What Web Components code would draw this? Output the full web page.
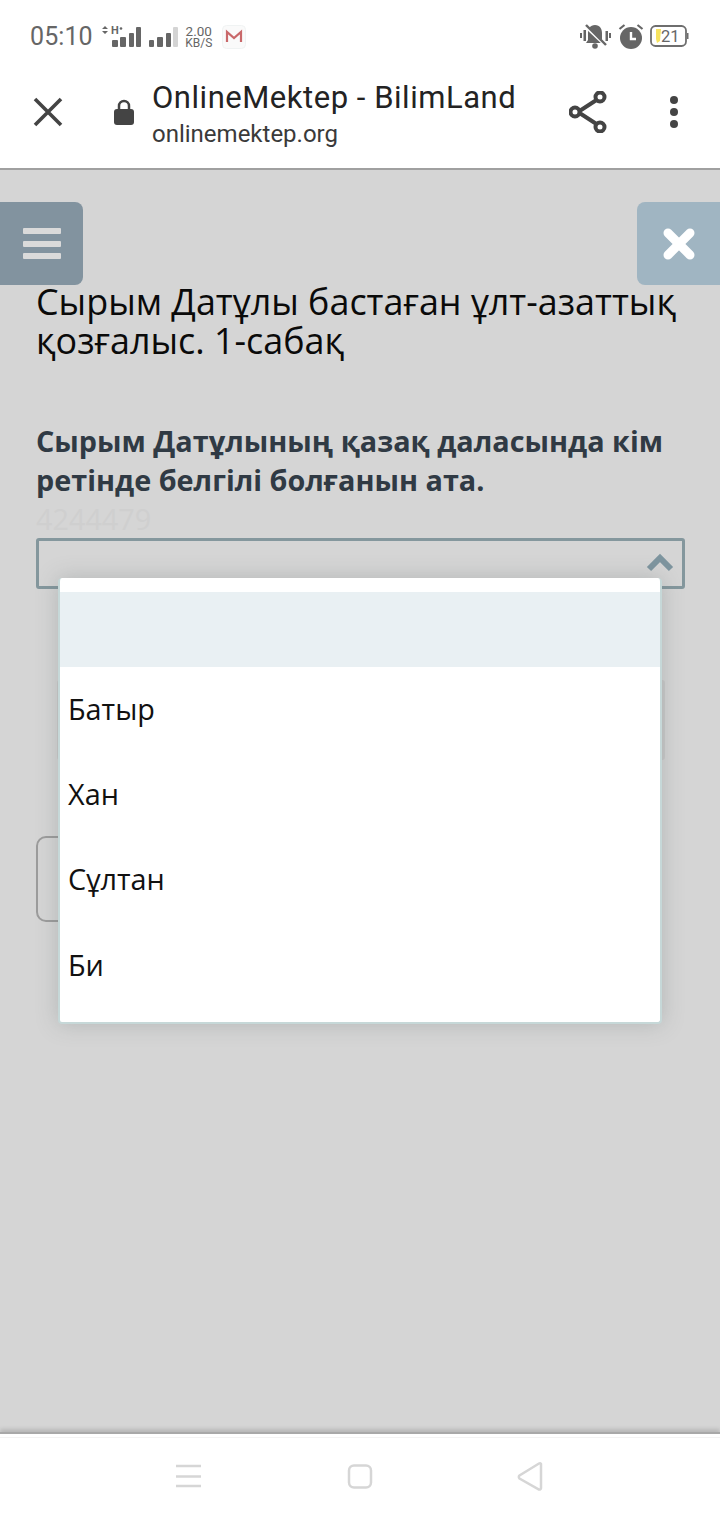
<!DOCTYPE html>
<html><head><meta charset="utf-8">
<style>
html,body{margin:0;padding:0;width:720px;height:1520px;overflow:hidden;background:#fff}
body{display:flex;flex-direction:column;font-family:"Open Sans",sans-serif}
</style></head><body>
<status-bar></status-bar>
<app-toolbar></app-toolbar>
<quiz-page>
  <quiz-select>
    <quiz-option blank></quiz-option>
    <quiz-option>Батыр</quiz-option>
    <quiz-option>Хан</quiz-option>
    <quiz-option>Сұлтан</quiz-option>
    <quiz-option>Би</quiz-option>
  </quiz-select>
</quiz-page>
<nav-bar></nav-bar>
<script>
function def(name,html){
  customElements.define(name,class extends HTMLElement{
    constructor(){super();this.attachShadow({mode:'open'}).innerHTML=html;}
  });
}
def('status-bar',`<style>
:host{display:flex;flex:none;height:70px;box-sizing:border-box;padding:3px 31px 0 30px;align-items:center;justify-content:space-between;font-family:Roboto,sans-serif;color:#666;background:#fff}
.l,.r{display:flex;align-items:center}
.r{margin-top:-2px}
.t{font-size:25px;letter-spacing:.1px;line-height:30px}
.sp{font-size:13.5px;line-height:12px;text-align:center;margin-left:7px;width:28px}
.sp span{display:block;font-size:12px}
svg{display:block}
</style>
<div class="l"><span class="t">05:10</span>
<svg style="margin-left:9px" width="76" height="24" viewBox="0 0 76 24" fill="#666">
<path d="M0 4l3-3 3 3zM0 6l3 3 3-3z"/>
<text x="9" y="9" font-family="Roboto" font-size="11" font-weight="700">H</text><circle cx="19" cy="3.500" r="1.300"/>
<rect x="10" y="15" width="6" height="7" rx="1"/><rect x="18" y="12" width="6" height="10" rx="1"/><rect x="27" y="8" width="5" height="14" rx="1"/><rect x="34" y="2" width="5" height="20" rx="1"/>
<rect x="47" y="15" width="5" height="7" rx="1"/><rect x="55" y="12" width="6" height="10" rx="1"/><rect x="64" y="8" width="5" height="14" rx="1"/><rect x="71" y="2" width="5" height="20" rx="1" fill="#d4d4d4"/>
</svg>
<div class="sp">2.00<span>KB/S</span></div>
<svg style="margin-left:9px" width="24" height="24" viewBox="0 0 24 24"><rect x="0.500" y="0.500" width="23" height="23" rx="4" fill="#fafafa" stroke="#f0f3f3"/><path d="M5 17V7l7 6 7-6v10" fill="none" stroke="#c9686a" stroke-width="2.200"/></svg>
</div>
<div class="r">
<svg width="32" height="26" viewBox="0 0 32 26" fill="#666"><path d="M16 2c-5 0-7 4-7 8v7l-2 3h18l-2-3v-7c0-4-2-8-7-8z"/><circle cx="16" cy="23" r="2.800"/><path d="M6 3l21 20" stroke="#fff" stroke-width="3"/><path d="M7 2l20 20" stroke="#666" stroke-width="2.400"/><rect x="1" y="10" width="2" height="5"/><rect x="4.500" y="7" width="2.500" height="11"/><rect x="26.500" y="8" width="2.500" height="10"/><rect x="30" y="10" width="2" height="5"/></svg>
<svg style="margin-left:7px" width="26" height="26" viewBox="0 0 26 26" fill="#666"><circle cx="13" cy="15" r="11"/><path d="M13 9v7h5" fill="none" stroke="#fff" stroke-width="2.400"/><path d="M1.500 6l5-4M24.500 6l-5-4" stroke="#666" stroke-width="2.200"/></svg>
<svg style="margin-left:6px" width="39" height="22" viewBox="0 0 39 22"><rect x="1" y="1" width="35" height="20" rx="4.500" fill="#fff" stroke="#6e6e6e" stroke-width="1.800"/><path d="M37 8h1.500v6H37z" fill="#6e6e6e"/><path d="M6 4h5l-1 12-3 2-1-4z" fill="#f7e35f"/><text x="11" y="17" font-family="Roboto" font-size="16.500" fill="#666">21</text></svg>
</div>`);
def('app-toolbar',`<style>
:host{display:flex;flex:none;height:100px;box-sizing:border-box;align-items:center;background:#fff;border-bottom:2px solid #a0a0a0;font-family:Roboto,sans-serif;color:#232323;padding-bottom:14px}
.x{margin-left:33px;width:30px;height:30px;flex:none}
.lock{margin-left:51px;flex:none}
.tx{margin-left:18px;flex:1;margin-top:6px}
.a{font-size:31px;line-height:38px;letter-spacing:.53px;white-space:nowrap}
.b{font-size:24px;line-height:35px;color:#3a3a3a;white-space:nowrap}
.s{flex:none;margin-right:63px}.m{flex:none;margin-right:42px}
svg{display:block}
</style>
<svg class="x" viewBox="0 0 30 30"><path d="M2 2l26 26M28 2L2 28" stroke="#444" stroke-width="3.600" fill="none"/></svg>
<svg class="lock" width="20" height="28" viewBox="0 0 20 28"><path d="M5 13V8a5 5 0 0 1 10 0v5" fill="none" stroke="#444" stroke-width="2.500"/><rect x="0" y="11" width="20" height="16" rx="3" fill="#444"/></svg>
<div class="tx"><div class="a">OnlineMektep - BilimLand</div><div class="b">onlinemektep.org</div></div>
<svg class="s" width="38" height="42" viewBox="0 0 38 42" fill="none" stroke="#444" stroke-width="4"><path d="M9 21L29 8M9 21l20 13"/><circle cx="6" cy="21" r="4.500" fill="#fff"/><circle cx="31" cy="6" r="4.500" fill="#fff"/><circle cx="31" cy="36" r="4.500" fill="#fff"/></svg>
<svg class="m" width="8" height="32" viewBox="0 0 8 32" fill="#444"><circle cx="4" cy="4" r="4"/><circle cx="4" cy="16" r="4"/><circle cx="4" cy="28" r="4"/></svg>`);
def('quiz-page',`<style>
:host{display:block;flex:1;min-height:0;position:relative;background:#d5d5d5;overflow:hidden;font-family:"Open Sans",sans-serif}
.top{display:flex;justify-content:space-between;margin-top:32px;height:83px}
.btn{width:83px;height:83px;display:flex;align-items:center;justify-content:center}
.m{background:#82939f;border-radius:0 8px 8px 0}
.c{background:#a0b5c2;border-radius:8px 0 0 8px}
.body{padding:0 35px 0 37px}
h1{margin:-3px -10px 0 -1px;font-weight:400;font-size:35.900px;line-height:39px;color:#0a0a0a}
.q{margin:61px -10px 0 -1px;font-weight:700;font-size:28.800px;line-height:39px;color:#303a44}
.id{font-size:28.800px;line-height:39px;color:#cfcfcf;height:39px;margin-left:-1px}
.sel{height:51px;box-sizing:border-box;border:3px solid #84979d;border-radius:3px;position:relative;margin-left:-1px}
.sel svg{position:absolute;right:8px;top:11px}
.ghost{margin:91px 20px 0;height:80px;border:solid #c9c9c9;border-width:0 3px;border-radius:3px}
.sub{margin-top:76px;width:150px;height:86px;box-sizing:border-box;border:2px solid #9c9c9c;border-radius:10px;margin-left:-1px}
.pop{position:absolute;left:58px;top:408px}
</style>
<div class="top">
<div class="btn m"><svg width="38" height="32" viewBox="0 0 38 32" fill="#dadada"><rect width="38" height="6" y="0" rx="1"/><rect width="38" height="6" y="13" rx="1"/><rect width="38" height="6" y="25" rx="1"/></svg></div>
<div class="btn c"><svg width="32" height="32" viewBox="0 0 32 32"><path d="M5 5l22 22M27 5L5 27" stroke="#fff" stroke-width="9" stroke-linecap="round"/></svg></div>
</div>
<div class="body">
<h1>Сырым Датұлы бастаған ұлт-азаттық қозғалыс. 1-сабақ</h1>
<div class="q">Сырым Датұлының қазақ даласында кім ретінде белгілі болғанын ата.</div>
<div class="id">4244479</div>
<div class="sel"><svg width="28" height="20" viewBox="0 0 28 20"><path d="M3 17L14 6l11 11" fill="none" stroke="#7e959f" stroke-width="6"/></svg></div>
<div class="ghost"></div>
<div class="sub"></div>
</div>
<div class="pop"><slot></slot></div>`);
def('quiz-select',`<style>
:host{display:block;width:604px;height:446px;box-sizing:border-box;background:#fff;border:2px solid #c6d8d8;border-top:0;border-radius:4px;padding-top:14px;box-shadow:0 0 22px rgba(90,100,100,.28);font-family:"Open Sans",sans-serif}
</style><slot></slot>`);
def('quiz-option',`<style>
:host{display:flex;align-items:center;height:85.300px;box-sizing:border-box;padding:0 0 3px 8px;font-size:28.800px;color:#111;white-space:nowrap}
:host([blank]){height:75px;background:#e9f0f3}
</style><slot></slot>`);
def('nav-bar',`<style>
:host{display:block;flex:none;height:88px;box-sizing:border-box;background:#fff;border-top:2px solid #a8a8a8;position:relative;box-shadow:0 -3px 4px rgba(0,0,0,.14),inset 0 3px 0 #fff,inset 0 4px 0 #f3f3f3}
svg{display:block}
</style>
<svg width="720" height="86" viewBox="0 0 720 86" fill="none" stroke="#d6d6d6"><path d="M176 32h25M176 42.500h25M176 52h25" stroke-width="2.500"/><rect x="349" y="31.500" width="22" height="22" rx="5" stroke-width="2.500"/><path d="M541 30v24a1.500 1.500 0 0 1-2 1.500l-19.500-11a2 2 0 0 1 0-3l19.500-12a1.500 1.500 0 0 1 2 .5z" stroke-width="2.500"/></svg>`);
</script>
</body></html>
